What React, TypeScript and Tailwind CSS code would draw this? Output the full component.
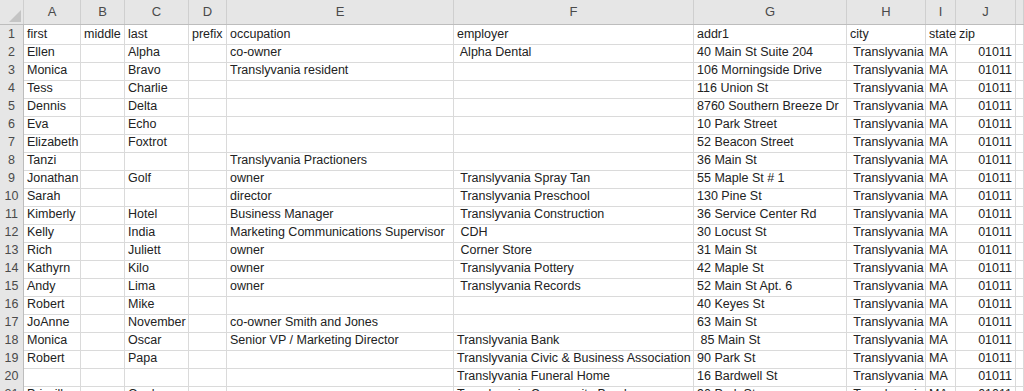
import React from 'react';

const COLS = ['A', 'B', 'C', 'D', 'E', 'F', 'G', 'H', 'I', 'J', ''];

// first, middle, last, prefix, occupation, employer, addr1, city, state, zip
const ROWS: string[][] = [
  ['first', 'middle', 'last', 'prefix', 'occupation', 'employer', 'addr1', 'city', 'state', 'zip'],
  ['Ellen', '', 'Alpha', '', 'co-owner', ' Alpha Dental', '40 Main St Suite 204', ' Translyvania', 'MA', '01011'],
  ['Monica', '', 'Bravo', '', 'Translyvania resident', '', '106 Morningside Drive', ' Translyvania', 'MA', '01011'],
  ['Tess', '', 'Charlie', '', '', '', '116 Union St', ' Translyvania', 'MA', '01011'],
  ['Dennis', '', 'Delta', '', '', '', '8760 Southern Breeze Dr', ' Translyvania', 'MA', '01011'],
  ['Eva', '', 'Echo', '', '', '', '10 Park Street', ' Translyvania', 'MA', '01011'],
  ['Elizabeth', '', 'Foxtrot', '', '', '', '52 Beacon Street', ' Translyvania', 'MA', '01011'],
  ['Tanzi', '', '', '', 'Translyvania Practioners', '', '36 Main St', ' Translyvania', 'MA', '01011'],
  ['Jonathan', '', 'Golf', '', 'owner', ' Translyvania Spray Tan', '55 Maple St # 1', ' Translyvania', 'MA', '01011'],
  ['Sarah', '', '', '', 'director', ' Translyvania Preschool', '130 Pine St', ' Translyvania', 'MA', '01011'],
  ['Kimberly', '', 'Hotel', '', 'Business Manager', ' Translyvania Construction', '36 Service Center Rd', ' Translyvania', 'MA', '01011'],
  ['Kelly', '', 'India', '', 'Marketing Communications Supervisor', ' CDH', '30 Locust St', ' Translyvania', 'MA', '01011'],
  ['Rich', '', 'Juliett', '', 'owner', ' Corner Store', '31 Main St', ' Translyvania', 'MA', '01011'],
  ['Kathyrn', '', 'Kilo', '', 'owner', ' Translyvania Pottery', '42 Maple St', ' Translyvania', 'MA', '01011'],
  ['Andy', '', 'Lima', '', 'owner', ' Translyvania Records', '52 Main St Apt. 6', ' Translyvania', 'MA', '01011'],
  ['Robert', '', 'Mike', '', '', '', '40 Keyes St', ' Translyvania', 'MA', '01011'],
  ['JoAnne', '', 'November', '', 'co-owner Smith and Jones', '', '63 Main St', ' Translyvania', 'MA', '01011'],
  ['Monica', '', 'Oscar', '', 'Senior VP / Marketing Director', 'Translyvania Bank', ' 85 Main St', ' Translyvania', 'MA', '01011'],
  ['Robert', '', 'Papa', '', '', 'Translyvania Civic & Business Association', '90 Park St', ' Translyvania', 'MA', '01011'],
  ['', '', '', '', '', 'Translyvania Funeral Home', '16 Bardwell St', ' Translyvania', 'MA', '01011'],
  ['Priscilla', '', 'Quebec', '', '', 'Translyvania Community Band', '90 Park St', ' Translyvania', 'MA', '01011'],
];

const grid = 'grid grid-cols-[24px_57px_44px_64px_38px_227px_240px_153px_79px_30px_60px_1fr]';

const App: React.FC = () => {
  return (
    <div className="w-[1024px] h-[391px] overflow-hidden bg-white text-[12.5px] text-[#222] font-['Liberation_Sans',Arial,sans-serif]">
      {/* column header */}
      <div className={`${grid} h-[25px] bg-[#e6e6e6] border-b border-[#bdbdbd]`}>
        <div className="relative border-r border-[#cfcfcf]">
          <svg className="absolute right-[2px] bottom-[2px]" width="12" height="12" viewBox="0 0 12 12">
            <polygon points="12,0 12,12 0,12" fill="#c4c4c4" />
          </svg>
        </div>
        {COLS.map((c, i) => (
          <div
            key={i}
            className="flex items-end justify-center pb-[3px] text-[13px] text-[#4a4a4a] border-r border-[#cfcfcf]"
          >
            {c}
          </div>
        ))}
      </div>

      {ROWS.map((row, r) => (
        <div key={r} className={`${grid} h-[18px]`}>
          <div className="flex items-center justify-center bg-[#e6e6e6] text-[12.5px] text-[#4a4a4a] border-r border-[#bdbdbd] border-b border-b-[#d4d4d4]">
            {r + 1}
          </div>
          {[...row, ''].map((cell, c) => (
            <div
              key={c}
              className={`flex items-center overflow-visible whitespace-pre px-[3px] border-r border-b border-[#dadada] leading-none ${
                c === 9 && r > 0 ? 'justify-end' : ''
              }`}
            >
              {cell}
            </div>
          ))}
        </div>
      ))}
    </div>
  );
};

export default App;
